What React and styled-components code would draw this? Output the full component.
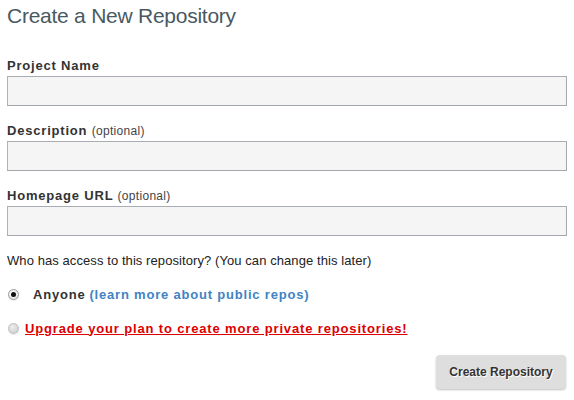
import React from "react";
import styled, { createGlobalStyle } from "styled-components";

const Global = createGlobalStyle`
  html, body { margin: 0; padding: 0; background: #fff; }
  body { font-family: "Liberation Sans", Arial, Helvetica, sans-serif; color: #333; }
`;

const Page = styled.div`
  width: 574px;
  height: 400px;
  box-sizing: border-box;
  padding: 4px 7px 0 7px;
  display: flex;
  flex-direction: column;
`;

const Title = styled.h1`
  margin: 0;
  font-size: 21px;
  font-weight: normal;
  color: #495961;
  line-height: 24px;
  letter-spacing: -0.25px;
`;

const Field = styled.div`
  display: flex;
  flex-direction: column;
  margin-top: ${(p) => p.$top}px;
`;

const Label = styled.label`
  font-size: 13px;
  font-weight: bold;
  color: #333;
  line-height: 16px;
  letter-spacing: 0.8px;
  margin-bottom: 2px;
`;

const Optional = styled.span`
  font-size: 12px;
  font-weight: normal;
  color: #444;
  letter-spacing: 0.3px;
`;

const Input = styled.input`
  box-sizing: border-box;
  width: 560px;
  height: 30px;
  margin: 0;
  background: #f5f5f5;
  border: 1px solid #aeb3ba;
  border-right-color: #a2a7ae;
  border-bottom-color: #a2a7ae;
  border-top-color: #a8adb4;
  padding: 4px 6px;
  font-size: 14px;
  outline: none;
`;

const Question = styled.p`
  margin: 17px 0 0 0;
  font-size: 13px;
  line-height: 15px;
  letter-spacing: 0.08px;
  color: #222;
`;

const Option = styled.div`
  display: flex;
  align-items: center;
  margin-top: ${(p) => p.$top}px;
  height: 16px;
`;

const Radio = styled.span`
  box-sizing: border-box;
  width: 11px;
  height: 11px;
  border-radius: 50%;
  margin-left: 1px;
  margin-right: ${(p) => p.$gap}px;
  flex: none;
  display: flex;
  align-items: center;
  justify-content: center;
  background: ${(p) => (p.$disabled ? "radial-gradient(circle at 40% 35%, #eee, #c9c9c9)" : "radial-gradient(circle at 40% 35%, #ffffff, #dcdcdc)")};
  border: 1px solid ${(p) => (p.$disabled ? "#bdbdbd" : "#9a9a9a")};
  box-shadow: 0 1px 1px rgba(0,0,0,0.08);
`;

const Dot = styled.span`
  width: 5px;
  height: 5px;
  border-radius: 50%;
  background: #111;
`;

const Strong = styled.span`
  font-size: 13px;
  font-weight: bold;
  color: #333;
  letter-spacing: 0.8px;
`;

const Link = styled.a`
  font-size: 13px;
  font-weight: bold;
  color: #4183c4;
  text-decoration: none;
  letter-spacing: 0.8px;
  margin-left: 4px;
`;

const Warn = styled.a`
  font-size: 13px;
  font-weight: bold;
  color: #d00;
  text-decoration: underline;
  letter-spacing: 0.85px;
`;

const Actions = styled.div`
  display: flex;
  justify-content: flex-end;
  margin-top: 19px;
  padding-right: 1px;
`;

const Button = styled.button`
  box-sizing: border-box;
  width: 130px;
  height: 34px;
  border: none;
  border-radius: 4px;
  background: #dedede;
  box-shadow: 0 1px 2px rgba(0,0,0,0.25);
  font-family: "Liberation Sans", Arial, sans-serif;
  font-size: 12px;
  font-weight: bold;
  color: #333;
  text-shadow: 1px 1px 0 #fff;
  cursor: pointer;
`;

export default function App() {
  return (
    <>
      <Global />
      <Page>
        <Title>Create a New Repository</Title>
        <Field $top={30}>
          <Label>Project Name</Label>
          <Input />
        </Field>
        <Field $top={17}>
          <Label>
            Description <Optional>(optional)</Optional>
          </Label>
          <Input />
        </Field>
        <Field $top={17}>
          <Label>
            Homepage URL <Optional>(optional)</Optional>
          </Label>
          <Input />
        </Field>
        <Question>Who has access to this repository? (You can change this later)</Question>
        <Option $top={18}>
          <Radio $gap={14}>
            <Dot />
          </Radio>
          <Strong>Anyone</Strong>
          <Link href="#">(learn more about public repos)</Link>
        </Option>
        <Option $top={18}>
          <Radio $disabled $gap={6} />
          <Warn href="#">Upgrade your plan to create more private repositories!</Warn>
        </Option>
        <Actions>
          <Button>Create Repository</Button>
        </Actions>
      </Page>
    </>
  );
}
